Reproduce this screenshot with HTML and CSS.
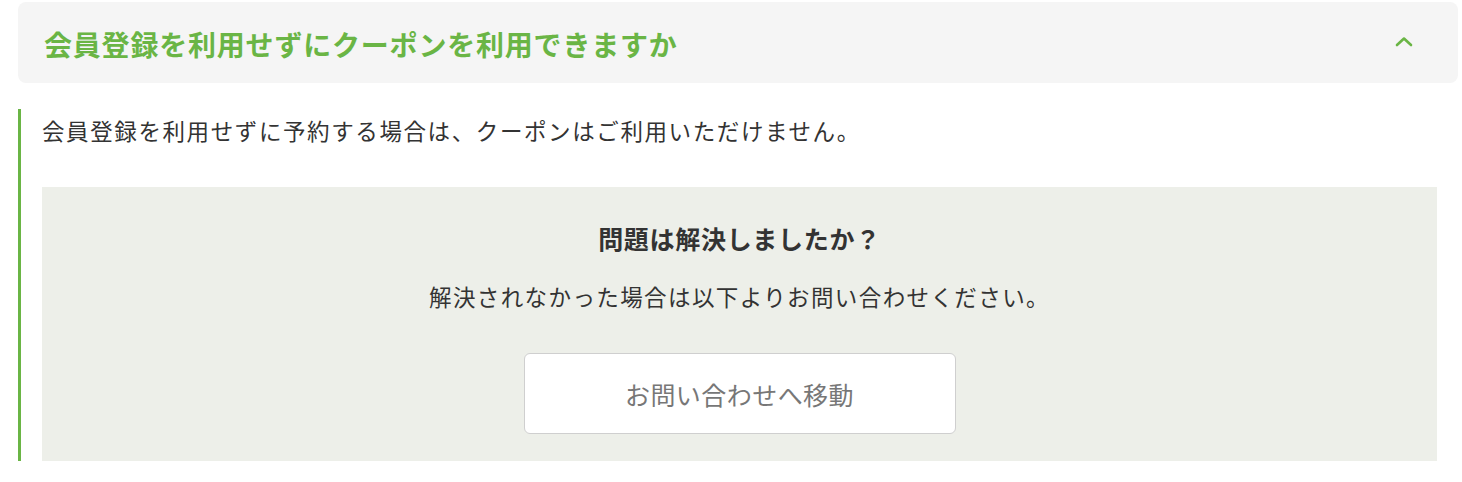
FILE: index.html
```html
<!DOCTYPE html>
<html lang="ja">
<head>
<meta charset="utf-8">
<title>FAQ</title>
<link rel="stylesheet" href="styles.css">
</head>
<body>
<div class="faq">
  <div class="faq-q">
    <h2 class="faq-title">会員登録を利用せずにクーポンを利用できますか</h2>
    <svg class="chevron" width="18" height="11" viewBox="0 0 18 11" aria-hidden="true">
      <polyline points="2,9 9,2.5 16,9" fill="none" stroke="#6ab545" stroke-width="2.6" stroke-linecap="round" stroke-linejoin="round"/>
    </svg>
  </div>
  <div class="faq-a">
    <p class="answer">会員登録を利用せずに予約する場合は、クーポンはご利用いただけません。</p>
    <div class="help">
      <p class="help-title">問題は解決しましたか？</p>
      <p class="help-text">解決されなかった場合は以下よりお問い合わせください。</p>
      <a class="help-btn" href="#">お問い合わせへ移動</a>
    </div>
  </div>
</div>
</body>
</html>
```
FILE: styles.css
```css
html, body {
  margin: 0;
  padding: 0;
  background: #fff;
}
body {
  font-family: "Noto Sans CJK JP", "Noto Sans", sans-serif;
  color: #333;
}
.faq {
  padding: 2px 4px 0 18px;
}
.faq-q {
  display: flex;
  align-items: center;
  justify-content: space-between;
  height: 81px;
  background: #f5f5f5;
  border-radius: 8px;
  padding: 0 45px 0 26px;
  box-sizing: border-box;
}
.faq-title {
  margin: 0;
  font-size: 28px;
  font-weight: 700;
  letter-spacing: 0.8px;
  line-height: 36px;
  color: #6ab545;
  padding-top: 3px;
}
.chevron {
  display: block;
  margin-top: -3px;
}
.faq-a {
  margin-top: 26px;
  border-left: 3px solid #6ab545;
  padding: 3px 21px 0 21px;
}
.answer {
  margin: 0;
  font-size: 22.5px;
  letter-spacing: 1.6px;
  line-height: 36px;
  color: #333;
}
.help {
  margin-top: 39px;
  background: #edefe9;
  display: flex;
  flex-direction: column;
  align-items: center;
  padding: 36px 0 27px;
}
.help-title {
  margin: 0;
  font-size: 25px;
  font-weight: 700;
  letter-spacing: 0.7px;
  line-height: 30px;
  color: #333;
}
.help-text {
  margin: 25px 0 0;
  font-size: 22.5px;
  letter-spacing: 1.4px;
  line-height: 36px;
  color: #333;
}
.help-btn {
  margin-top: 39px;
  width: 432px;
  height: 81px;
  box-sizing: border-box;
  display: flex;
  align-items: center;
  justify-content: center;
  background: #fff;
  border: 1px solid #cfcfcf;
  border-radius: 6px;
  font-size: 25px;
  letter-spacing: 0.45px;
  color: #777;
  text-decoration: none;
}
```
